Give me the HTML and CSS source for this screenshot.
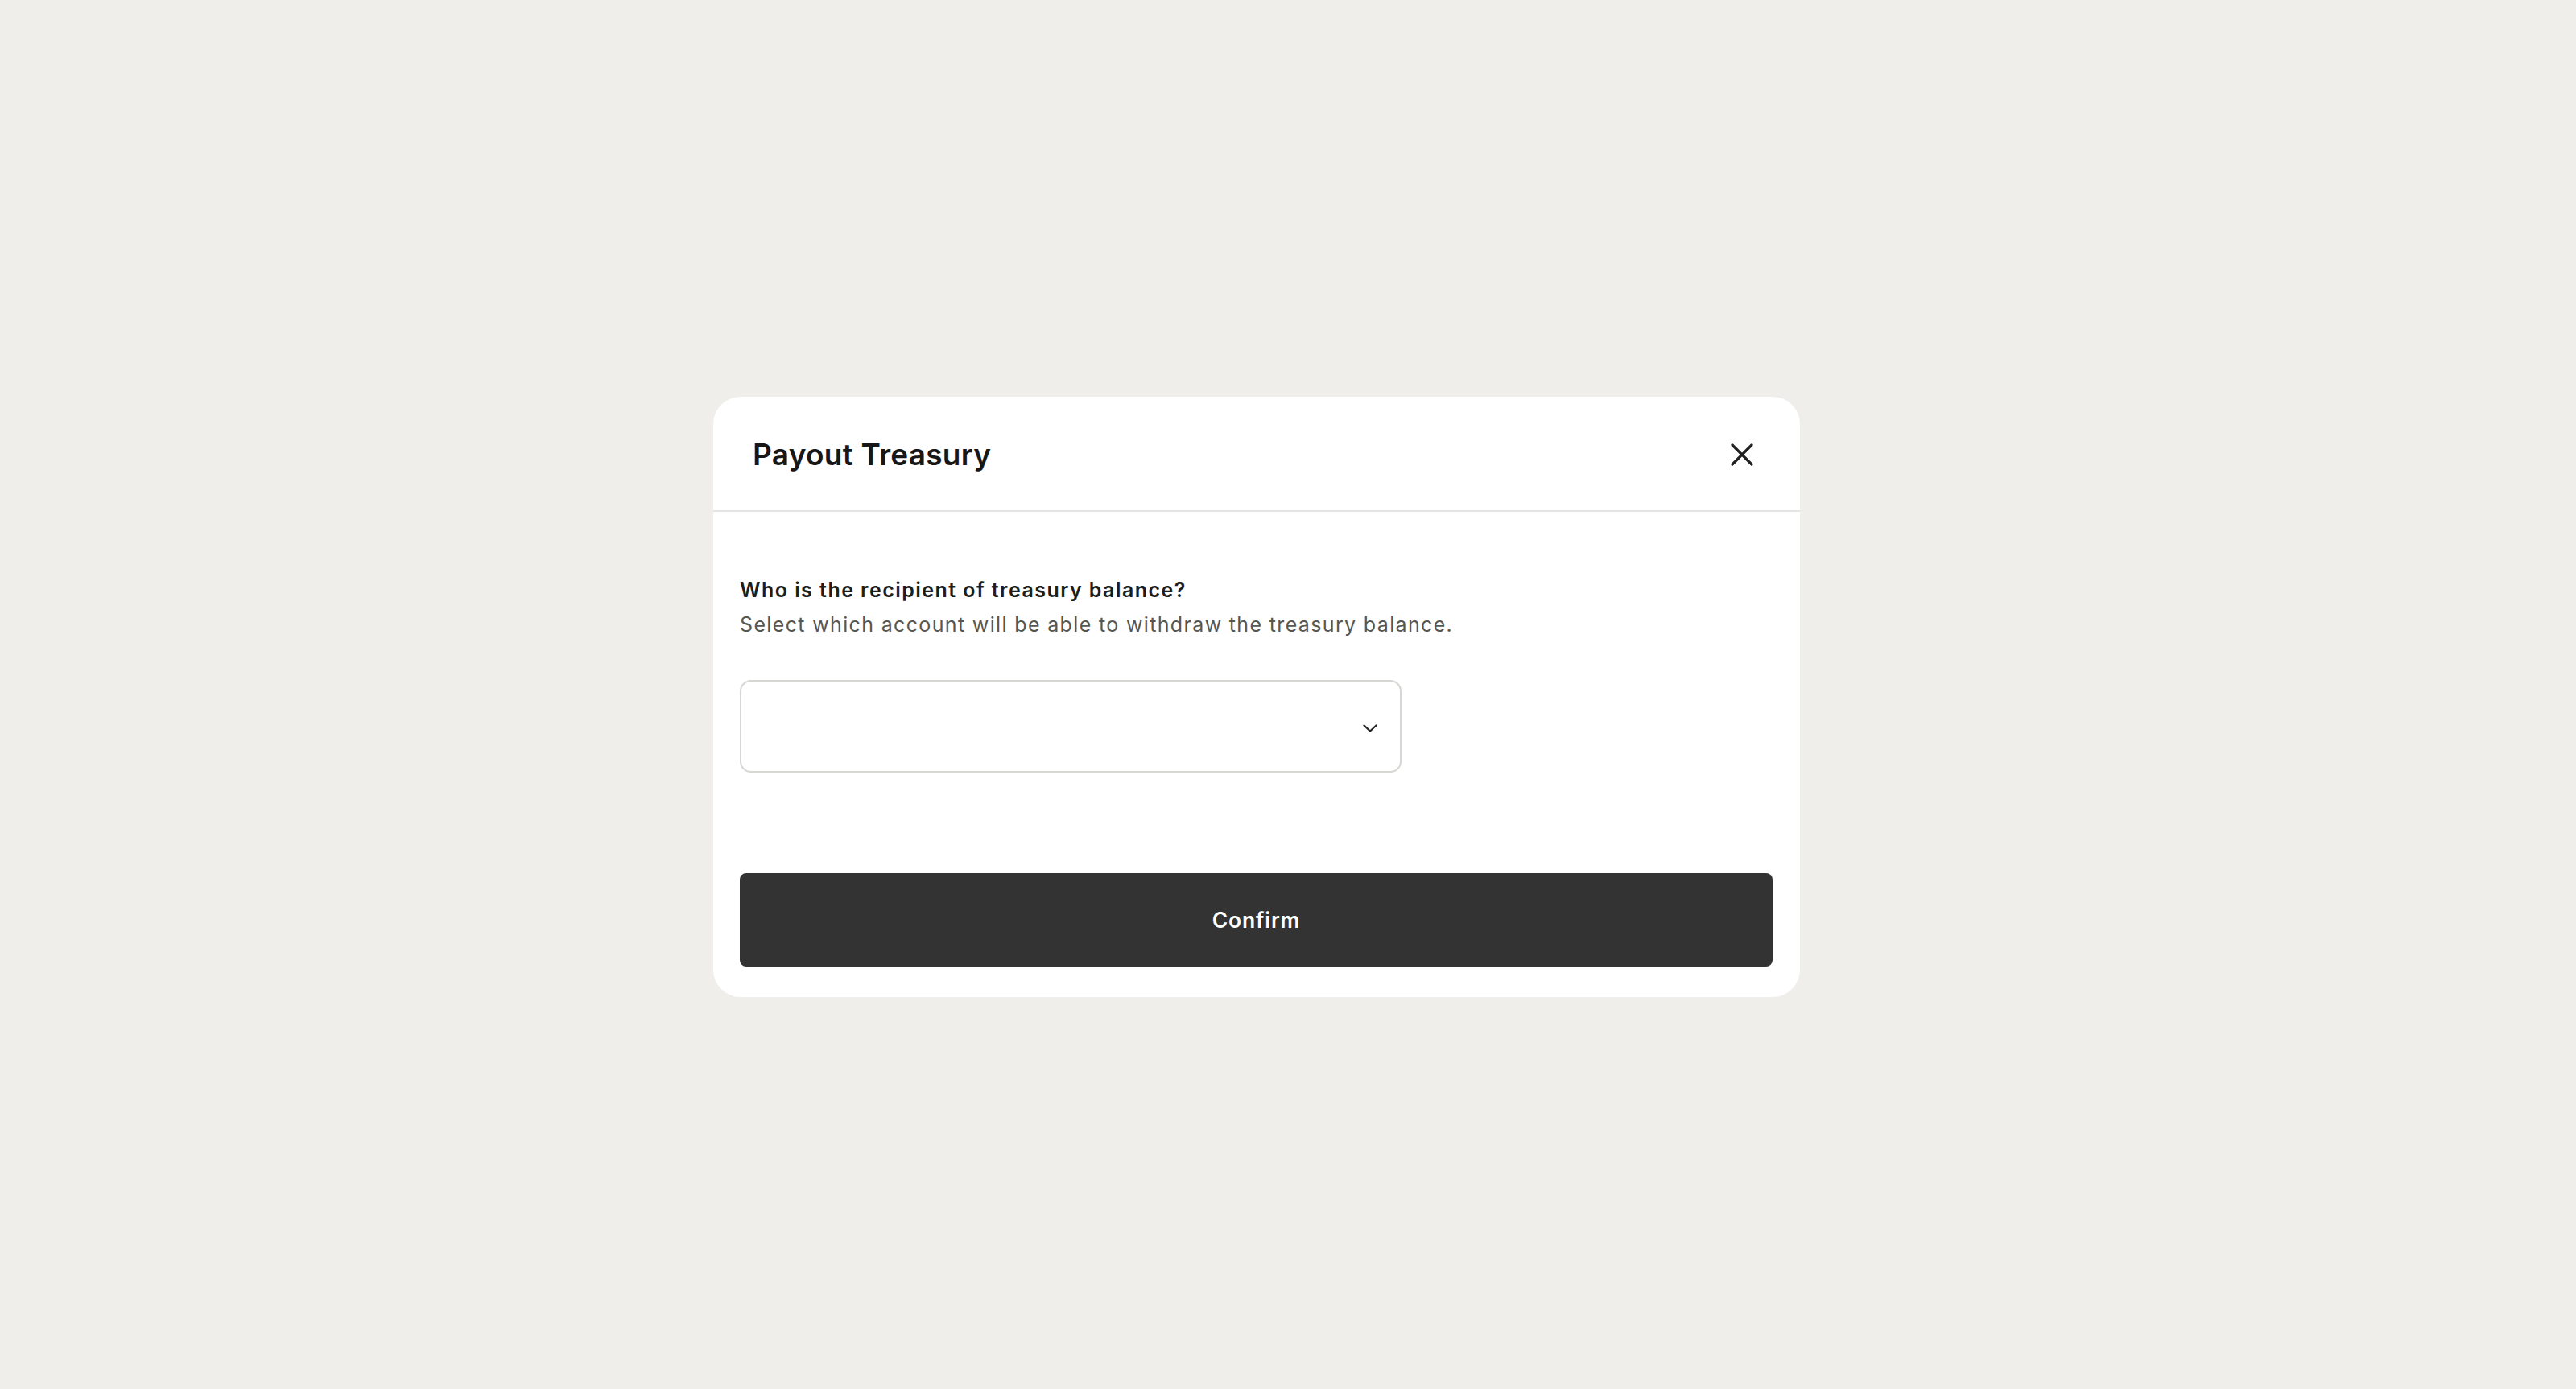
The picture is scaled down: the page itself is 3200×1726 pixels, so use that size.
FILE: index.html
```html
<!DOCTYPE html>
<html lang="en">
<head>
<meta charset="utf-8">
<title>Payout Treasury</title>
<link rel="stylesheet" href="styles.css">
</head>
<body>
<div class="overlay">
  <div class="modal" role="dialog" aria-labelledby="modal-title">
    <div class="modal-header">
      <h2 class="modal-title" id="modal-title">Payout Treasury</h2>
      <button class="close-btn" type="button" aria-label="Close">
        <svg viewBox="0 0 28 28" width="28" height="28" fill="none" stroke="#1f1f1f" stroke-width="3.2" stroke-linecap="round">
          <path d="M2 2 L26 26 M26 2 L2 26"/>
        </svg>
      </button>
    </div>
    <div class="modal-body">
      <div class="field-label">
        <p class="question">Who is the recipient of treasury balance?</p>
        <p class="hint">Select which account will be able to withdraw the treasury balance.</p>
      </div>
      <div class="select">
        <span class="select-value"></span>
        <svg class="chevron" viewBox="0 0 18 10" width="18" height="10" fill="none" stroke="#222" stroke-width="2.2" stroke-linecap="round" stroke-linejoin="round">
          <path d="M1.5 1.5 L9 8.5 L16.5 1.5"/>
        </svg>
      </div>
      <button class="confirm-btn" type="button">Confirm</button>
    </div>
  </div>
</div>
</body>
</html>
```

FILE: styles.css
```css
* { box-sizing: border-box; }

html, body {
  margin: 0;
  padding: 0;
}

body {
  background: #efeeea;
  font-family: Inter, "Noto Sans", "Liberation Sans", sans-serif;
  color: #1b1b1b;
}

.overlay {
  height: 1726px;
  display: flex;
  align-items: center;
  justify-content: center;
  padding: 6px 78px 0 0;
}

.modal {
  width: 1350px;
  background: #ffffff;
  border-radius: 34px;
  overflow: hidden;
}

.modal-header {
  height: 143px;
  display: flex;
  align-items: center;
  justify-content: space-between;
  padding: 2px 58px 0 49px;
  border-bottom: 2px solid #e4e4e2;
}

.modal-title {
  margin: 0;
  font-size: 37px;
  font-weight: 600;
  line-height: 44px;
  letter-spacing: 0.25px;
  color: #171717;
}

.close-btn {
  width: 28px;
  height: 28px;
  padding: 0;
  border: 0;
  background: none;
  display: flex;
  cursor: pointer;
}

.modal-body {
  padding: 76px 34px 38px 33px;
  display: flex;
  flex-direction: column;
}

.field-label p {
  margin: 0;
  font-size: 25px;
  line-height: 43px;
}

.question {
  font-weight: 600;
  letter-spacing: 1.45px;
  color: #1c1e1e;
}

.hint {
  font-weight: 400;
  letter-spacing: 1.35px;
  color: #575752;
}

.select {
  margin-top: 47px;
  width: 822px;
  height: 115px;
  border: 2px solid #d6d6d2;
  border-radius: 14px;
  display: flex;
  align-items: center;
  justify-content: space-between;
  padding: 4px 28px 0 30px;
}

.chevron {
  display: block;
}

.confirm-btn {
  margin-top: 125px;
  height: 116px;
  width: 100%;
  border: 0;
  border-radius: 8px;
  background: #333333;
  color: #ffffff;
  font-family: Inter, "Noto Sans", "Liberation Sans", sans-serif;
  font-size: 26.5px;
  font-weight: 600;
  letter-spacing: 0.8px;
  cursor: pointer;
}
```
